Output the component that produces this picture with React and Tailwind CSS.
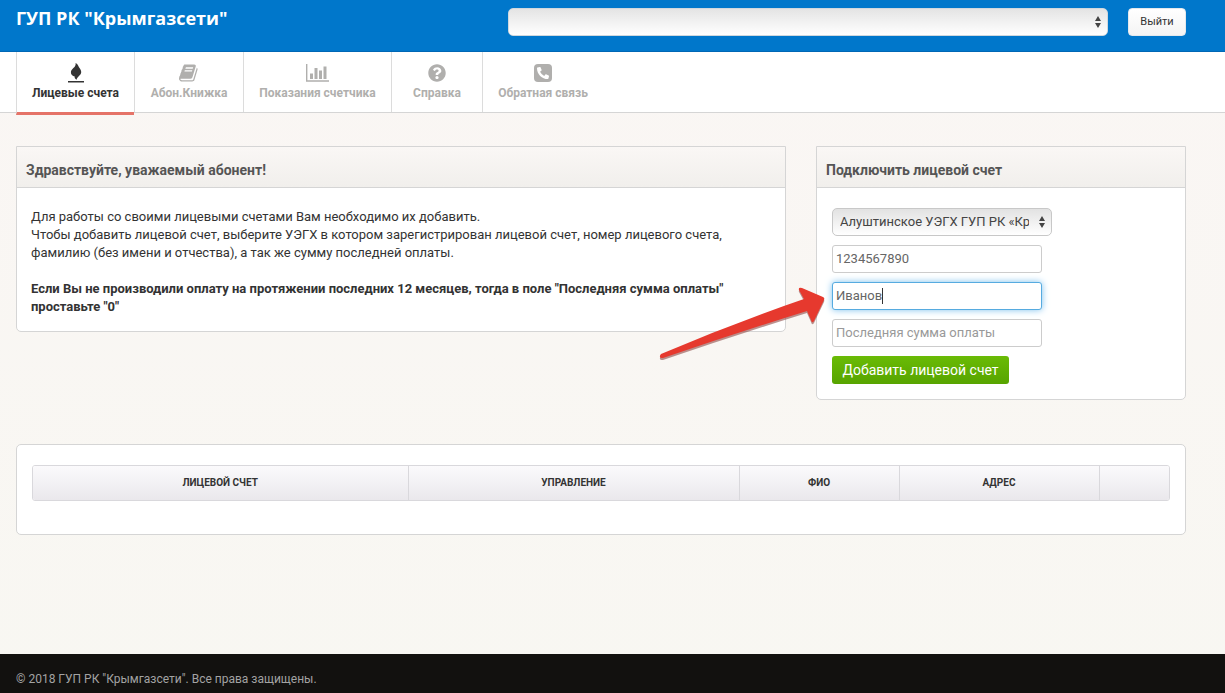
import { FaQuestionCircle, FaPhoneAlt } from "react-icons/fa";

const FlameIcon = () => (
  <svg viewBox="0 0 16 20" className="h-5 w-4 fill-current" aria-hidden="true">
    <path d="M7.600 0c2.600 1.600 2.600 2.700 3.400 4.200 1.200 1.800 2.400 3 2.200 5.200-.3 2.900-4.200 4.300-4.600 7.300C7 16 6.400 15 6.700 13.600 4.500 13 2.700 11.500 2.900 9 3.200 5.400 8.400 4.600 7.600 0z" />
    <path d="M0 18h16v1.500H0z" />
  </svg>
);

const BookIcon = () => (
  <svg viewBox="0 0 1792 1792" className="h-5 w-5 fill-current" aria-hidden="true">
    <path d="M1639 478q40 57 18 129l-275 906q-19 64-76.500 107.500t-122.500 43.500h-923q-77 0-148.500-53.500t-99.500-131.500q-24-67-2-127 0-4 3-27t4-37q1-8-3-21.500t-3-19.500q2-11 8-21t16.500-23.500 16.500-23.500q23-38 45-91.500t30-91.500q3-10 .5-30t-.5-28q3-11 17-28t17-23q21-36 42-92t25-90q1-9-2.500-32t.5-28q4-13 22-30.500t22-22.500q19-26 42.500-84.500t27.500-96.500q1-8-3-25.500t-2-26.500q2-8 9-18t18-23 17-21q8-12 16.500-30.500t15-35 16-36 19.500-32 26.500-23.500 36-11.500 47.500 5.500l-1 3q38-9 51-9h761q74 0 114 56t18 130l-274 906q-36 119-71.500 153.500t-128.500 34.500h-869q-27 0-38 15-11 16-1 43 24 70 144 70h923q29 0 56-15.500t35-41.500l300-987q7-22 5-57 38 15 59 43zm-1064 2q-4 13 2 22.500t20 9.500h608q13 0 25.500-9.500t16.500-22.500l21-64q4-13-2-22.500t-20-9.500h-608q-13 0-25.500 9.500t-16.500 22.500zm-83 256q-4 13 2 22.500t20 9.500h608q13 0 25.500-9.500t16.500-22.500l21-64q4-13-2-22.500t-20-9.500h-608q-13 0-25.500 9.500t-16.500 22.500z" />
  </svg>
);

const ChartIcon = () => (
  <svg viewBox="0 0 23 18" className="h-[18px] w-[23px] fill-current" aria-hidden="true">
    <path d="M0 0h1.400v16.200H23v1.500H0zM4 9.500h3V15H4zM8.500 4h3v11h-3zM13 6.500h3V15h-3zM17.500 2.500h3V15h-3z" />
  </svg>
);

const PhoneIcon = () => (
  <span className="flex h-[18px] w-[18px] items-center justify-center rounded-[4px] bg-current">
    <FaPhoneAlt className="h-3 w-3 text-white" />
  </span>
);

const tabs = [
  { label: "Лицевые счета", icon: <FlameIcon />, width: "w-[118px]", active: true },
  { label: "Абон.Книжка", icon: <BookIcon />, width: "w-[109px]" },
  { label: "Показания счетчика", icon: <ChartIcon />, width: "w-[148px]" },
  { label: "Справка", icon: <FaQuestionCircle className="h-[18px] w-[18px]" />, width: "w-[91px]" },
  { label: "Обратная связь", icon: <PhoneIcon />, width: "w-[121px]" },
];

const columns = [
  { label: "Лицевой счет", width: "w-auto" },
  { label: "Управление", width: "w-[331px]" },
  { label: "ФИО", width: "w-[160px]" },
  { label: "Адрес", width: "w-[200px]" },
  { label: "", width: "w-[70px]" },
];

const SelectArrows = () => (
  <svg
    viewBox="0 0 6 12"
    className="pointer-events-none absolute top-2 right-[7px] h-3 w-[6px] fill-[#444]"
    aria-hidden="true"
  >
    <path d="M3 0l3 5H0zM3 12L0 7h6z" />
  </svg>
);

const PanelTitle = ({ children }) => (
  <h2 className="border-b border-[#d5d5d5] bg-linear-to-b from-[#faf7f5] to-[#f1efec] px-[9px] pt-[13px] pb-[7px] text-sm leading-5 font-bold text-[#555]">
    {children}
  </h2>
);

// Red pointer that leads to the surname field
const PointerArrow = () => (
  <svg
    viewBox="0 0 172 78"
    className="pointer-events-none absolute top-[138px] -left-[161px] h-[78px] w-[172px]"
    aria-hidden="true"
  >
    <path
      d="M5 69Q75 39 148 14L143 5Q142 2 146 3L167 12Q169 13 168 15L158 36Q156 39 155 35L151 26Q80 48 7 73Q2 73 5 69z"
      className="fill-[#8d4a46]/60"
      transform="translate(0 2)"
    />
    <path
      d="M5 69Q75 39 148 14L143 5Q142 2 146 3L167 12Q169 13 168 15L158 36Q156 39 155 35L151 26Q80 48 7 73Q2 73 5 69z"
      className="fill-[#e6392e]"
    />
  </svg>
);

const inputClass =
  "h-7 w-[210px] rounded-[3px] border bg-white px-[3px] pb-px text-[13px] text-[#666] outline-none placeholder:text-[#999]";

const App = () => {
  return (
    <div className="flex min-h-screen flex-col bg-linear-to-b from-[#faf6f4] to-[#f8f7f2] font-[Roboto,'Noto_Sans',sans-serif] text-[13px] leading-[18px] text-[#333]">
      {/* Header */}
      <header className="border-b border-[#0067b5] bg-[#0077cb]">
        <div className="mx-4 flex h-[51px] max-w-[1170px] items-start justify-between pt-2">
          <h1 className="font-['Open_Sans','Noto_Sans',sans-serif] text-lg leading-5 font-bold text-white">
            ГУП РК "Крымгазсети"
          </h1>
          <div className="flex gap-5">
            <div className="relative">
              <select
                aria-label="Лицевой счет"
                className="h-7 w-[600px] appearance-none rounded-[5px] border border-[#d0d8de] bg-linear-to-b from-[#e4e4e4] to-white px-2"
              />
              <SelectArrows />
            </div>
            <button
              type="button"
              className="h-7 w-[58px] rounded-[4px] border border-[#e4e8ec] bg-linear-to-b from-white to-[#f4f4f4] text-[11px]"
            >
              Выйти
            </button>
          </div>
        </div>
      </header>

      {/* Navigation */}
      <nav className="h-[61px] border-b border-[#d5d5d5] bg-white">
        <div className="mx-4 flex">
          {tabs.map((tab) => (
            <a
              key={tab.label}
              href="#"
              className={`flex flex-col items-center border-l border-[#dcdcdc] text-xs leading-[18px] font-bold whitespace-nowrap ${tab.width} ${
                tab.active ? "h-[63px] border-b-3 border-b-[#e57368] text-[#333]" : "h-[60px] text-[#b0afad]"
              }`}
            >
              <span className="mt-[10px] flex h-[22px] items-center">{tab.icon}</span>
              {tab.label}
            </a>
          ))}
        </div>
      </nav>

      {/* Content */}
      <main className="mx-4 mt-[33px] mb-11 max-w-[1170px] flex-1">
        <div className="grid grid-cols-[77fr_37fr] items-start gap-[30px]">
          <section className="rounded-b-[5px] border border-[#d5d5d5] bg-white">
            <PanelTitle>Здравствуйте, уважаемый абонент!</PanelTitle>
            <div className="px-[14px] pt-5 pb-[15px]">
              <p>
                Для работы со своими лицевыми счетами Вам необходимо их добавить.
                <br />
                Чтобы добавить лицевой счет, выберите УЭГХ в котором зарегистрирован лицевой счет, номер лицевого счета,
                <br />
                фамилию (без имени и отчества), а так же сумму последней оплаты.
              </p>
              <p className="mt-[18px] font-bold">
                Если Вы не производили оплату на протяжении последних 12 месяцев, тогда в поле "Последняя сумма оплаты"
                <br />
                проставьте "0"
              </p>
            </div>
          </section>

          <section className="relative rounded-b-[5px] border border-[#d5d5d5] bg-white">
            <PanelTitle>Подключить лицевой счет</PanelTitle>
            <form className="flex flex-col items-start gap-[9px] px-[15px] pt-5 pb-[15px]">
              <div className="relative">
                <select
                  aria-label="УЭГХ"
                  className="h-7 w-[220px] appearance-none rounded-[5px] border border-[#c8c8c8] bg-linear-to-b from-[#e2e2e2] to-white pr-[22px] pl-[7px] text-[13px] text-[#444]"
                >
                  <option>Алуштинское УЭГХ ГУП РК «Крымгазсети»</option>
                </select>
                <SelectArrows />
              </div>
              <input
                type="text"
                aria-label="Номер лицевого счета"
                defaultValue="1234567890"
                className={`${inputClass} border-[#ccc]`}
              />
              <div className="relative flex">
                <input
                  type="text"
                  aria-label="Фамилия"
                  defaultValue="Иванов"
                  className={`${inputClass} border-[#56abe0] shadow-[0_0_7px_#7cc0ee]`}
                />
                <span className="absolute top-[6px] left-[50px] h-4 w-px bg-[#333]" />
              </div>
              <input
                type="text"
                aria-label="Последняя сумма оплаты"
                placeholder="Последняя сумма оплаты"
                className={`${inputClass} border-[#ccc]`}
              />
              <button
                type="button"
                className="h-7 w-[177px] rounded-[3px] bg-linear-to-b from-[#6abb06] to-[#57a400] text-sm whitespace-nowrap text-white"
              >
                Добавить лицевой счет
              </button>
            </form>
            <PointerArrow />
          </section>
        </div>

        <section className="mt-11 rounded-[5px] border border-[#d5d5d5] bg-white px-[15px] pt-5 pb-[33px]">
          <div className="overflow-hidden rounded-[3px] border border-[#d9d8dc]">
            <table className="w-full table-fixed">
              <thead>
                <tr className="h-[34px] bg-linear-to-b from-[#fbfafc] to-[#eae8ec]">
                  {columns.map((col, i) => (
                    <th
                      key={i}
                      className={`${col.width} border-r border-[#d9d8dc] text-[10px] leading-[14px] font-bold uppercase last:border-r-0`}
                    >
                      {col.label}
                    </th>
                  ))}
                </tr>
              </thead>
            </table>
          </div>
        </section>
      </main>

      {/* Footer */}
      <footer className="bg-[#12110f] px-4 pt-4 pb-[5px] text-xs leading-[18px] text-[#a3a3a3]">
        © 2018 ГУП РК "Крымгазсети". Все права защищены.
      </footer>
    </div>
  );
};

export default App;
